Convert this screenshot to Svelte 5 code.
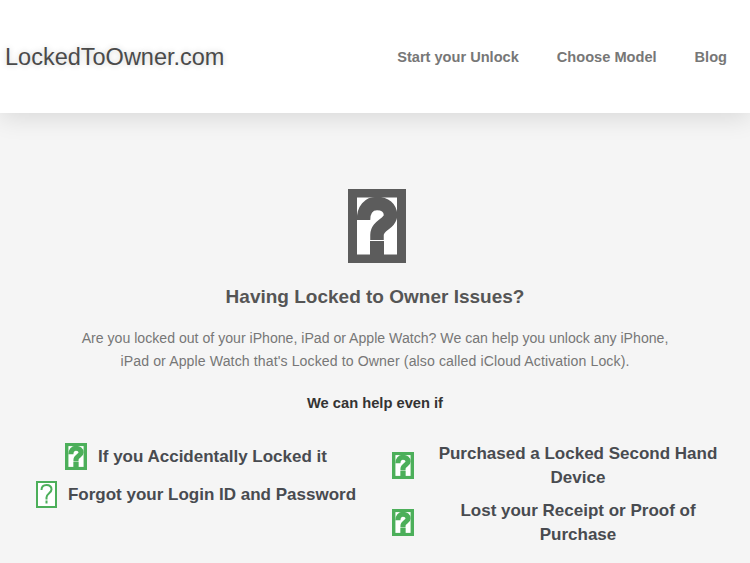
<script>
  const left = [
    { text: 'If you Accidentally Locked it', thin: false },
    { text: 'Forgot your Login ID and Password', thin: true },
  ];
  const right = ['Purchased a Locked Second Hand Device', 'Lost your Receipt or Proof of Purchase'];
</script>

{#snippet mark(cls)}
  <svg class={cls} viewBox="0 0 58 74" preserveAspectRatio="none" aria-hidden="true">
    <rect class="paper" x="0" y="0" width="58" height="74" />
    <path class="curl" d="M15.5 31 C15.5 20 21 14.5 29 14.5 C37 14.5 42.5 19 42.5 26 C42.5 35 29 36 29 46 L29 51" />
    <rect class="foot" x="22" y="52" width="14" height="14" />
    <rect class="frame" x="4.5" y="4" width="49" height="66" />
  </svg>
{/snippet}

{#snippet thinMark()}
  <svg class="icon thin" viewBox="0 0 21 27" aria-hidden="true">
    <rect x="1" y="1" width="19" height="25" class="thin-frame" />
    <path class="thin-q" d="M5.5 9 C5.5 5.5 7.5 4 10.5 4 C13.5 4 15.5 5.5 15.5 8.5 C15.5 12 10.5 12.5 10.5 16.5 L10.5 18.5 M10.5 19.5 L10.5 22.5" />
  </svg>
{/snippet}

<header>
  <div class="logo">LockedToOwner.com</div>
  <nav>
    <span>Start your Unlock</span>
    <span>Choose Model</span>
    <span>Blog</span>
  </nav>
</header>

<main>
  {@render mark('big')}
  <h1>Having Locked to Owner Issues?</h1>
  <p>Are you locked out of your iPhone, iPad or Apple Watch? We can help you unlock any iPhone,<br /><span class="second">iPad or Apple Watch that's Locked to Owner (also called iCloud Activation Lock).</span></p>
  <h2>We can help even if</h2>

  <div class="cols">
    <div class="col-left">
      {#each left as item}
        <div class="row">
          {#if item.thin}
            {@render thinMark()}
          {:else}
            {@render mark('icon')}
          {/if}
          <span>{item.text}</span>
        </div>
      {/each}
    </div>
    <div class="col-right">
      {#each right as text}
        <div class="row">
          {@render mark('icon')}
          <span class="wrap">{text}</span>
        </div>
      {/each}
    </div>
  </div>
</main>

<style>
  :global(body) {
    margin: 0;
    background: #f5f5f5;
    font-family: 'Liberation Sans', Arial, sans-serif;
    overflow: hidden;
  }

  header {
    height: 113px;
    background: #fff;
    box-shadow: 0 4px 24px rgba(0, 0, 0, 0.12);
    display: flex;
    align-items: center;
    justify-content: space-between;
    padding: 0 23px 0 5px;
    position: relative;
  }

  .logo {
    font-size: 23.5px;
    color: #4a4a4a;
    text-shadow: 0 0 6px rgba(0, 0, 0, 0.2);
    padding-top: 2px;
  }

  nav {
    display: flex;
    gap: 38px;
    font-size: 14.6px;
    font-weight: bold;
    color: #777;
  }

  main {
    display: flex;
    flex-direction: column;
    align-items: center;
    padding-top: 76px;
    text-align: center;
  }

  .big {
    width: 58px;
    height: 74px;
    --ink: #5c5c5c;
    display: block;
    margin-left: 4px;
  }

  .paper {
    fill: #fff;
  }

  .curl {
    fill: none;
    stroke: var(--ink);
    stroke-width: 13.5;
  }

  .foot {
    fill: var(--ink);
  }

  .frame {
    fill: none;
    stroke: var(--ink);
    stroke-width: 9;
  }

  h1 {
    margin: 23px 0 0;
    font-size: 19px;
    line-height: 22px;
    color: #555;
  }

  p {
    margin: 19px 0 0;
    font-size: 14.12px;
    line-height: 23px;
    color: #777;
  }

  .second {
    letter-spacing: 0.1px;
  }

  h2 {
    margin: 19px 0 0;
    font-size: 14.7px;
    line-height: 23px;
    color: #333;
  }

  .cols {
    align-self: stretch;
    display: grid;
    grid-template-columns: 392px 1fr;
    margin-top: 25px;
    font-size: 17px;
    font-weight: bold;
    line-height: 24px;
    color: #484b50;
  }

  .col-left {
    display: flex;
    flex-direction: column;
    align-items: center;
    gap: 11px;
    padding-top: 3px;
  }

  .col-left .row {
    gap: 11px;
  }

  .col-right {
    display: flex;
    flex-direction: column;
    gap: 9px;
    padding-top: 2px;
    padding-right: 18px;
  }

  .row {
    display: flex;
    align-items: center;
    gap: 10px;
  }

  .wrap {
    flex: 1;
    padding: 0 8px;
  }

  .icon {
    width: 22px;
    height: 27px;
    flex: none;
    --ink: #4caf5a;
  }

  .col-right .icon {
    margin-bottom: 2px;
  }

  .thin-frame {
    fill: #fff;
    stroke: #4caf5a;
    stroke-width: 2;
  }

  .thin-q {
    fill: none;
    stroke: #4caf5a;
    stroke-width: 2;
  }

  .thin {
    width: 21px;
  }
</style>
